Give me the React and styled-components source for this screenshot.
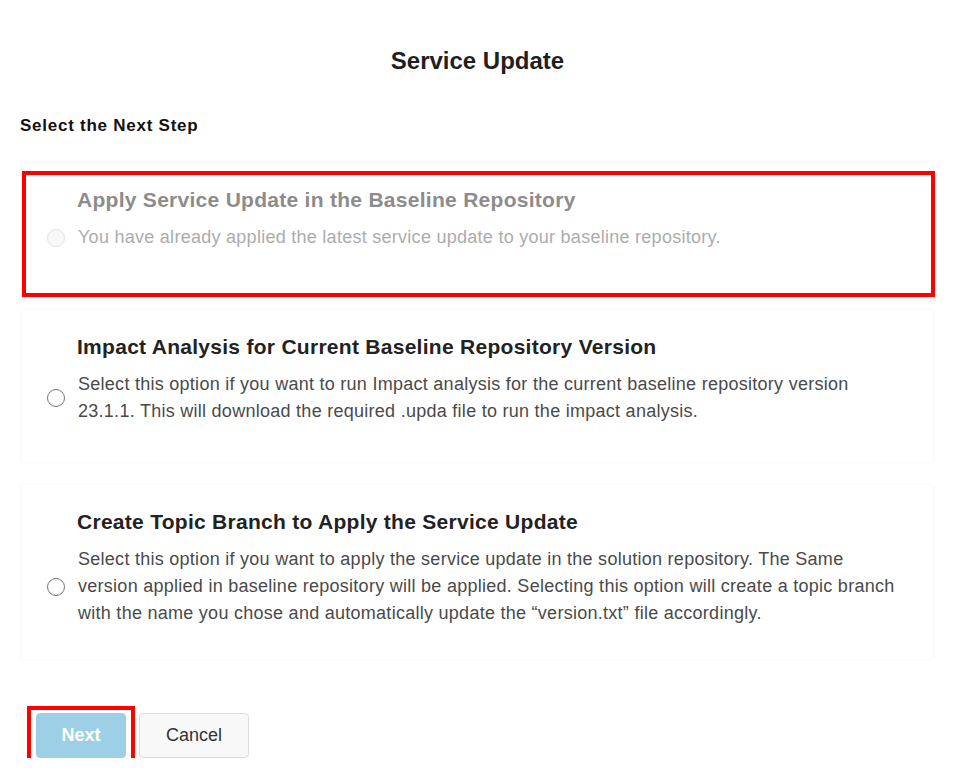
import React, { useState } from 'react';
import styled, { createGlobalStyle } from 'styled-components';

const GlobalStyle = createGlobalStyle`
  body {
    margin: 0;
    background: #fff;
    font-family: 'Liberation Sans', Arial, sans-serif;
    color: #222;
  }
`;

const Page = styled.div`
  padding: 0 23px 0 22px;
`;

const Heading = styled.h1`
  margin: 47px 0 0;
  font-size: 24px;
  line-height: 28px;
  font-weight: bold;
  text-align: center;
  color: #1f1f1f;
`;

const StepLabel = styled.h2`
  margin: 40px 0 0 -2px;
  font-size: 17px;
  line-height: 21px;
  font-weight: bold;
  letter-spacing: 0.75px;
  color: #111;
`;

const OptionList = styled.div`
  display: flex;
  flex-direction: column;
  margin-top: 27px;
`;

const Card = styled.div`
  position: relative;
  background: #fff;
  box-shadow: 0 0 4px rgba(0, 0, 0, 0.06);
  padding: 25px 32px ${(p) => p.$bottom}px 25px;
  margin-bottom: ${(p) => p.$gap}px;
  cursor: ${(p) => (p.$disabled ? 'default' : 'pointer')};
`;

const Highlight = styled.div`
  position: absolute;
  top: 8px;
  left: 0;
  right: -2px;
  bottom: 3px;
  border: 4px solid #ff0000;
  pointer-events: none;
`;

const Title = styled.div`
  margin-left: 30px;
  font-size: 21px;
  line-height: 24px;
  font-weight: bold;
  letter-spacing: 0.28px;
  color: ${(p) => (p.$disabled ? '#8c8c8c' : '#222')};
`;

const Row = styled.div`
  display: flex;
  align-items: center;
  gap: 13px;
  margin-top: 12px;
`;

const Radio = styled.span`
  flex: none;
  width: 16px;
  height: 16px;
  border-radius: 50%;
  border: 1px solid ${(p) => (p.$disabled ? '#e2e2e2' : '#777')};
  background: ${(p) => (p.$disabled ? '#f8f8f8' : '#fff')};
  display: flex;
  align-items: center;
  justify-content: center;

  &::after {
    content: '';
    width: 8px;
    height: 8px;
    border-radius: 50%;
    background: ${(p) => (p.$checked ? '#0a7cc1' : 'transparent')};
  }
`;

const Description = styled.div`
  font-size: 18px;
  line-height: 27px;
  letter-spacing: 0.27px;
  color: ${(p) => (p.$disabled ? '#acacac' : '#4a4a4a')};
`;

const Actions = styled.div`
  display: flex;
  gap: 13px;
  margin: 54px 0 0 14px;
`;

const ButtonWrap = styled.div`
  position: relative;

  ${(p) =>
    p.$marked &&
    `&::after {
      content: '';
      position: absolute;
      top: -7px;
      bottom: -8px;
      left: -9px;
      right: -9px;
      border: 4px solid #ff0000;
      pointer-events: none;
    }`}
`;

const Button = styled.button`
  height: 45px;
  border-radius: 4px;
  font-family: 'Liberation Sans', Arial, sans-serif;
  font-size: 18px;
  padding: 0;
  width: ${(p) => (p.$primary ? 90 : 110)}px;
  border: 1px solid ${(p) => (p.$primary ? '#9dd0e6' : '#dcdcdc')};
  background: ${(p) => (p.$primary ? '#9dd0e6' : '#f8f8f8')};
  color: ${(p) => (p.$primary ? '#fff' : '#333')};
  font-weight: ${(p) => (p.$primary ? 'bold' : 'normal')};
  cursor: ${(p) => (p.$primary ? 'default' : 'pointer')};
`;

const options = [
  {
    id: 'apply',
    title: 'Apply Service Update in the Baseline Repository',
    text: 'You have already applied the latest service update to your baseline repository.',
    disabled: true,
    bottom: 49,
    gap: 10,
  },
  {
    id: 'impact',
    title: 'Impact Analysis for Current Baseline Repository Version',
    text: 'Select this option if you want to run Impact analysis for the current baseline repository version 23.1.1. This will download the required .upda file to run the impact analysis.',
    bottom: 37,
    gap: 23,
  },
  {
    id: 'branch',
    title: 'Create Topic Branch to Apply the Service Update',
    text: 'Select this option if you want to apply the service update in the solution repository. The Same version applied in baseline repository will be applied. Selecting this option will create a topic branch with the name you chose and automatically update the \u201cversion.txt\u201d file accordingly.',
    bottom: 32,
    gap: 0,
  },
];

const App = () => {
  const [selected, setSelected] = useState('');

  return (
    <Page>
      <GlobalStyle />
      <Heading>Service Update</Heading>
      <StepLabel>Select the Next Step</StepLabel>
      <OptionList>
        {options.map((opt) => (
          <Card
            key={opt.id}
            $bottom={opt.bottom}
            $gap={opt.gap}
            $disabled={opt.disabled}
            onClick={() => !opt.disabled && setSelected(opt.id)}
          >
            <Title $disabled={opt.disabled}>{opt.title}</Title>
            <Row>
              <Radio $disabled={opt.disabled} $checked={selected === opt.id} />
              <Description $disabled={opt.disabled}>{opt.text}</Description>
            </Row>
            {opt.disabled && <Highlight />}
          </Card>
        ))}
      </OptionList>
      <Actions>
        <ButtonWrap $marked>
          <Button $primary disabled={!selected}>Next</Button>
        </ButtonWrap>
        <ButtonWrap>
          <Button>Cancel</Button>
        </ButtonWrap>
      </Actions>
    </Page>
  );
};

export default App;
